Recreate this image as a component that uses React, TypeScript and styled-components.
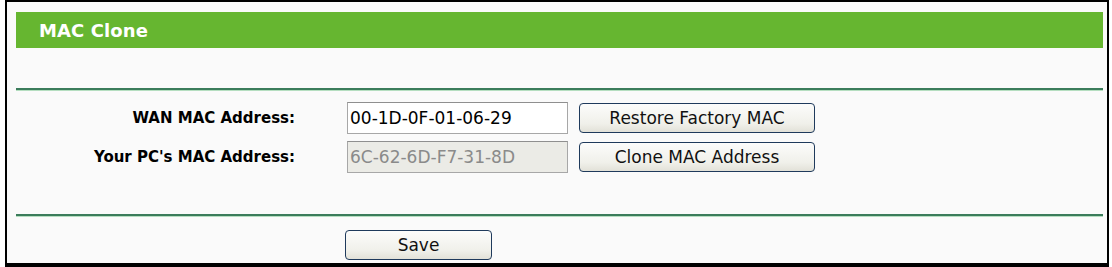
import React from "react";
import styled, { createGlobalStyle } from "styled-components";

const GlobalStyle = createGlobalStyle`
    html, body {
        margin: 0;
        padding: 0;
        background: #ffffff;
        overflow: hidden;
    }
`;

// Styled Components
const Frame = styled.div`
    box-sizing: border-box;
    margin-left: 5px;
    width: 1104px;
    height: 267px;
    border: 2px solid #000000;
    border-bottom-width: 4px;
    background: #fafafa;
    padding: 10px 4px 0 9px;
    display: flex;
    flex-direction: column;
    font-family: "DejaVu Sans", "Liberation Sans", sans-serif;
    overflow: hidden;
`;

const TitleBar = styled.div`
    height: 36px;
    background: #66b630;
    display: flex;
    align-items: center;
    padding-left: 23px;
`;

const Title = styled.h1`
    margin: 0;
    font-size: 18px;
    font-weight: bold;
    color: #ffffff;
    letter-spacing: 0.1px;
`;

const Divider = styled.div<{ $top: number }>`
    margin-top: ${(props) => props.$top}px;
    height: 2px;
    background: #3b7c5b;
    border-bottom: 1px solid #b5dec0;
`;

const Form = styled.div`
    margin-top: 11px;
    display: flex;
    flex-direction: column;
    gap: 7px;
`;

const Row = styled.div`
    display: flex;
    align-items: center;
    height: 32px;
`;

const Label = styled.label`
    box-sizing: border-box;
    width: 331px;
    padding-right: 52px;
    text-align: right;
    font-size: 15px;
    font-weight: bold;
    color: #000000;
`;

const Input = styled.input<{ $disabled?: boolean }>`
    box-sizing: border-box;
    width: 221px;
    height: 32px;
    margin: 0 11px 0 0;
    padding: 0 0 0 2px;
    border: 1px solid #a7a7a7;
    border-top-color: #8f8f8f;
    background: ${(props) => (props.$disabled ? "#ebebe6" : "#ffffff")};
    color: ${(props) => (props.$disabled ? "#8a8a8a" : "#000000")};
    font-family: "DejaVu Sans", "Liberation Sans", sans-serif;
    font-size: 17px;
    outline: none;
`;

const Button = styled.button<{ $width: number }>`
    box-sizing: border-box;
    width: ${(props) => props.$width}px;
    height: 30px;
    padding: 0;
    border: 1px solid #1f3a5c;
    border-radius: 4px;
    background: linear-gradient(#fcfcfb, #f0f0ea 70%, #e2e1d8);
    color: #111111;
    font-family: "DejaVu Sans", "Liberation Sans", sans-serif;
    font-size: 17px;
    cursor: pointer;
`;

const SaveRow = styled.div`
    margin-top: 13px;
    padding-left: 329px;
    display: flex;
`;

export default function App() {
    return (
        <>
            <GlobalStyle />
            <Frame>
                <TitleBar>
                    <Title>MAC Clone</Title>
                </TitleBar>
                <Divider $top={40} />
                <Form>
                    <Row>
                        <Label>WAN MAC Address:</Label>
                        <Input defaultValue="00-1D-0F-01-06-29" />
                        <Button $width={236}>Restore Factory MAC</Button>
                    </Row>
                    <Row>
                        <Label>Your PC's MAC Address:</Label>
                        <Input $disabled readOnly defaultValue="6C-62-6D-F7-31-8D" />
                        <Button $width={236}>Clone MAC Address</Button>
                    </Row>
                </Form>
                <Divider $top={41} />
                <SaveRow>
                    <Button $width={147}>Save</Button>
                </SaveRow>
            </Frame>
        </>
    );
}
